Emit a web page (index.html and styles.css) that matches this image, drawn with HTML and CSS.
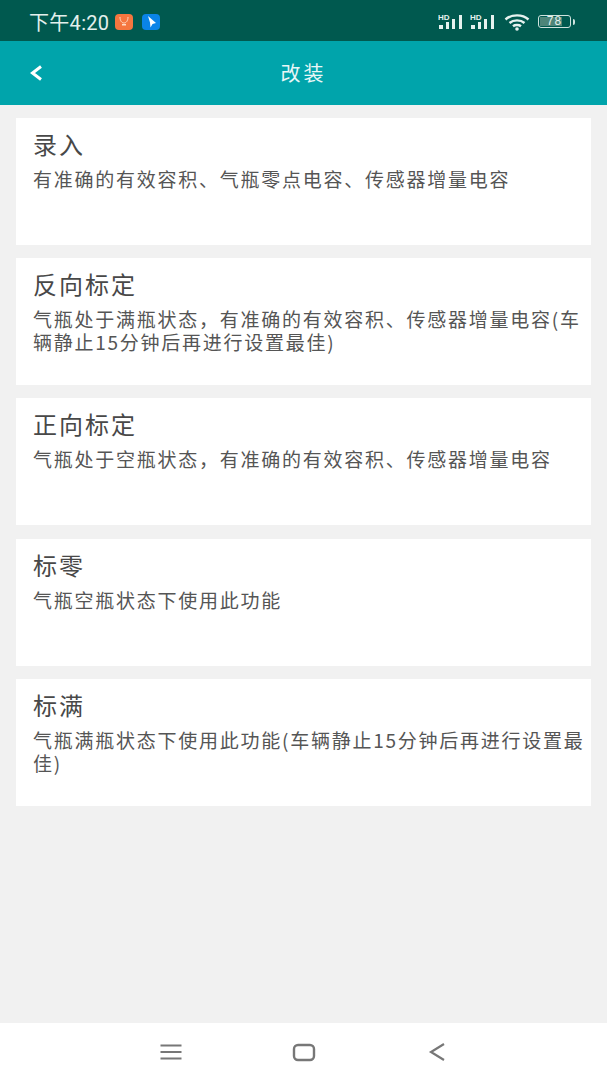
FILE: index.html
```html
<!DOCTYPE html>
<html lang="zh-CN">
<head>
  <meta charset="UTF-8">
  <meta name="viewport" content="width=device-width, initial-scale=1.0">
  <title>改装</title>
  <link rel="stylesheet" href="styles.css">
</head>
<body>
  <div class="page">
    <div class="status-bar">
      <div class="status-left">
        <span class="status-time">下午4:20</span>
        <svg class="app-icon" viewBox="0 0 18 16"><rect width="18" height="16" rx="4" fill="#f5763f"/><path d="M5 3c0 4 2 6 4 6s4-2 4-6" fill="none" stroke="#ffd9c4" stroke-width="1"/><rect x="7" y="10" width="4" height="1.500" fill="#ffd9c4"/></svg>
        <svg class="app-icon" viewBox="0 0 18 16"><rect width="18" height="16" rx="4" fill="#0a84e8"/><path d="M6 2l8 7-3.500 1-2 3.500-.5-5z" fill="#fff"/></svg>
      </div>
      <div class="status-right">
        <svg class="signal" viewBox="0 0 27 17"><text x="0" y="7" class="hd">HD</text><rect x="1" y="12" width="4" height="4" fill="#e6f2ef"/><rect x="8" y="9" width="3" height="7" fill="#e6f2ef"/><rect x="14" y="6" width="3" height="10" fill="#e6f2ef"/><rect x="21" y="2" width="3" height="14" fill="#e6f2ef"/></svg>
        <svg class="signal" viewBox="0 0 27 17"><text x="0" y="7" class="hd">HD</text><rect x="1" y="12" width="4" height="4" fill="#e6f2ef"/><rect x="8" y="9" width="3" height="7" fill="#e6f2ef"/><rect x="14" y="6" width="3" height="10" fill="#e6f2ef"/><rect x="21" y="2" width="3" height="14" fill="#e6f2ef"/></svg>
        <svg class="wifi" viewBox="0 0 26 18" fill="none" stroke="#e6f2ef" stroke-width="2.400"><path d="M1.500 6.500c6-5.500 17-5.500 23 0"/><path d="M5.500 10c4-3.500 11-3.500 15 0"/><path d="M9 13.200c2-1.600 6-1.600 8 0"/><circle cx="13" cy="16" r="1.800" fill="#e6f2ef" stroke="none"/></svg>
        <div class="battery">
          <div class="battery-body"><span class="battery-level"></span><span class="battery-num">78</span></div>
          <span class="battery-cap"></span>
        </div>
      </div>
    </div>

    <div class="top-bar">
      <svg class="back" viewBox="0 0 14 16" fill="none" stroke="#fff" stroke-width="3"><path d="M12 1.500L3.500 8l8.500 6.500"/></svg>
      <span class="top-title">改装</span>
    </div>

    <div class="list">
      <div class="item">
        <div class="item-title">录入</div>
        <div class="item-desc">有准确的有效容积、气瓶零点电容、传感器增量电容</div>
      </div>
      <div class="item">
        <div class="item-title">反向标定</div>
        <div class="item-desc">气瓶处于满瓶状态，有准确的有效容积、传感器增量电容(车辆静止15分钟后再进行设置最佳)</div>
      </div>
      <div class="item">
        <div class="item-title">正向标定</div>
        <div class="item-desc">气瓶处于空瓶状态，有准确的有效容积、传感器增量电容</div>
      </div>
      <div class="item">
        <div class="item-title">标零</div>
        <div class="item-desc">气瓶空瓶状态下使用此功能</div>
      </div>
      <div class="item">
        <div class="item-title">标满</div>
        <div class="item-desc">气瓶满瓶状态下使用此功能(车辆静止15分钟后再进行设置最佳)</div>
      </div>
    </div>

    <div class="nav-bar">
      <svg class="nav-icon" viewBox="0 0 24 24" fill="none" stroke="#777" stroke-width="2.200"><path d="M1.500 5.500h21M1.500 12h21M1.500 18.500h21"/></svg>
      <svg class="nav-icon" viewBox="0 0 24 24" fill="none" stroke="#777" stroke-width="2.400"><rect x="2" y="5" width="20" height="15" rx="4"/></svg>
      <svg class="nav-icon" viewBox="0 0 24 24" fill="none" stroke="#777" stroke-width="2.200"><path d="M19 4L6 12l13 8"/></svg>
    </div>
  </div>
</body>
</html>
```

FILE: styles.css
```css
body {
  margin: 0;
  font-family: "Noto Sans CJK SC", "Liberation Sans", sans-serif;
  background-color: #f1f1f1;
}

.page {
  display: flex;
  flex-direction: column;
  height: 1080px;
  overflow: hidden;
}

.status-bar {
  display: flex;
  justify-content: space-between;
  align-items: center;
  height: 41px;
  padding: 2px 32px 0 29px;
  box-sizing: border-box;
  background-color: #00594f;
  color: #e3f0ed;
  flex-shrink: 0;
}

.status-left, .status-right {
  display: flex;
  align-items: center;
}

.status-time {
  font-family: "Roboto", "Noto Sans CJK SC", sans-serif;
  font-size: 20px;
  letter-spacing: 0.3px;
  margin-right: 6px;
}

.app-icon {
  width: 18px;
  height: 16px;
  margin-right: 9px;
}

.signal {
  width: 27px;
  height: 17px;
  margin-right: 5px;
}

.hd {
  font-family: "Liberation Sans", sans-serif;
  font-size: 8px;
  font-weight: bold;
  fill: #e6f2ef;
}

.wifi {
  width: 26px;
  height: 18px;
  margin: 0 8px 0 2px;
}

.battery {
  display: flex;
  align-items: center;
}

.battery-body {
  position: relative;
  width: 31px;
  height: 11px;
  border: 1px solid #cfe3de;
  border-radius: 3px;
  display: flex;
  align-items: center;
  justify-content: center;
}

.battery-level {
  position: absolute;
  left: 1px;
  top: 1px;
  bottom: 1px;
  width: 72%;
  background-color: #4d8579;
}

.battery-num {
  position: relative;
  font-family: "Liberation Sans", sans-serif;
  font-size: 12px;
  line-height: 11px;
  letter-spacing: 1px;
  color: #e3f0ed;
}

.battery-cap {
  width: 2px;
  height: 6px;
  margin-left: 2px;
  background-color: #cfe3de;
  border-radius: 0 2px 2px 0;
}

.top-bar {
  position: relative;
  display: flex;
  align-items: center;
  justify-content: center;
  height: 64px;
  padding-bottom: 1px;
  box-sizing: border-box;
  background-color: #00a4ab;
  flex-shrink: 0;
}

.back {
  position: absolute;
  left: 29px;
  top: 24px;
  width: 14px;
  height: 16px;
}

.top-title {
  font-size: 20px;
  letter-spacing: 3px;
  color: #e8f7f7;
}

.list {
  flex: 1;
  padding: 13px 16px 0;
}

.item {
  box-sizing: border-box;
  height: 127px;
  margin-bottom: 13.2px;
  padding: 9px 4px 0 17px;
  background-color: #fff;
}

.item-title {
  font-size: 24px;
  line-height: 34px;
  letter-spacing: 2px;
  color: #484848;
}

.item-desc {
  margin-top: 6px;
  font-size: 19px;
  line-height: 23px;
  letter-spacing: 1.750px;
  color: #555;
}

.nav-bar {
  display: flex;
  justify-content: center;
  align-items: center;
  gap: 109px;
  height: 57px;
  background-color: #fff;
  flex-shrink: 0;
}

.nav-icon {
  width: 24px;
  height: 24px;
}
```
